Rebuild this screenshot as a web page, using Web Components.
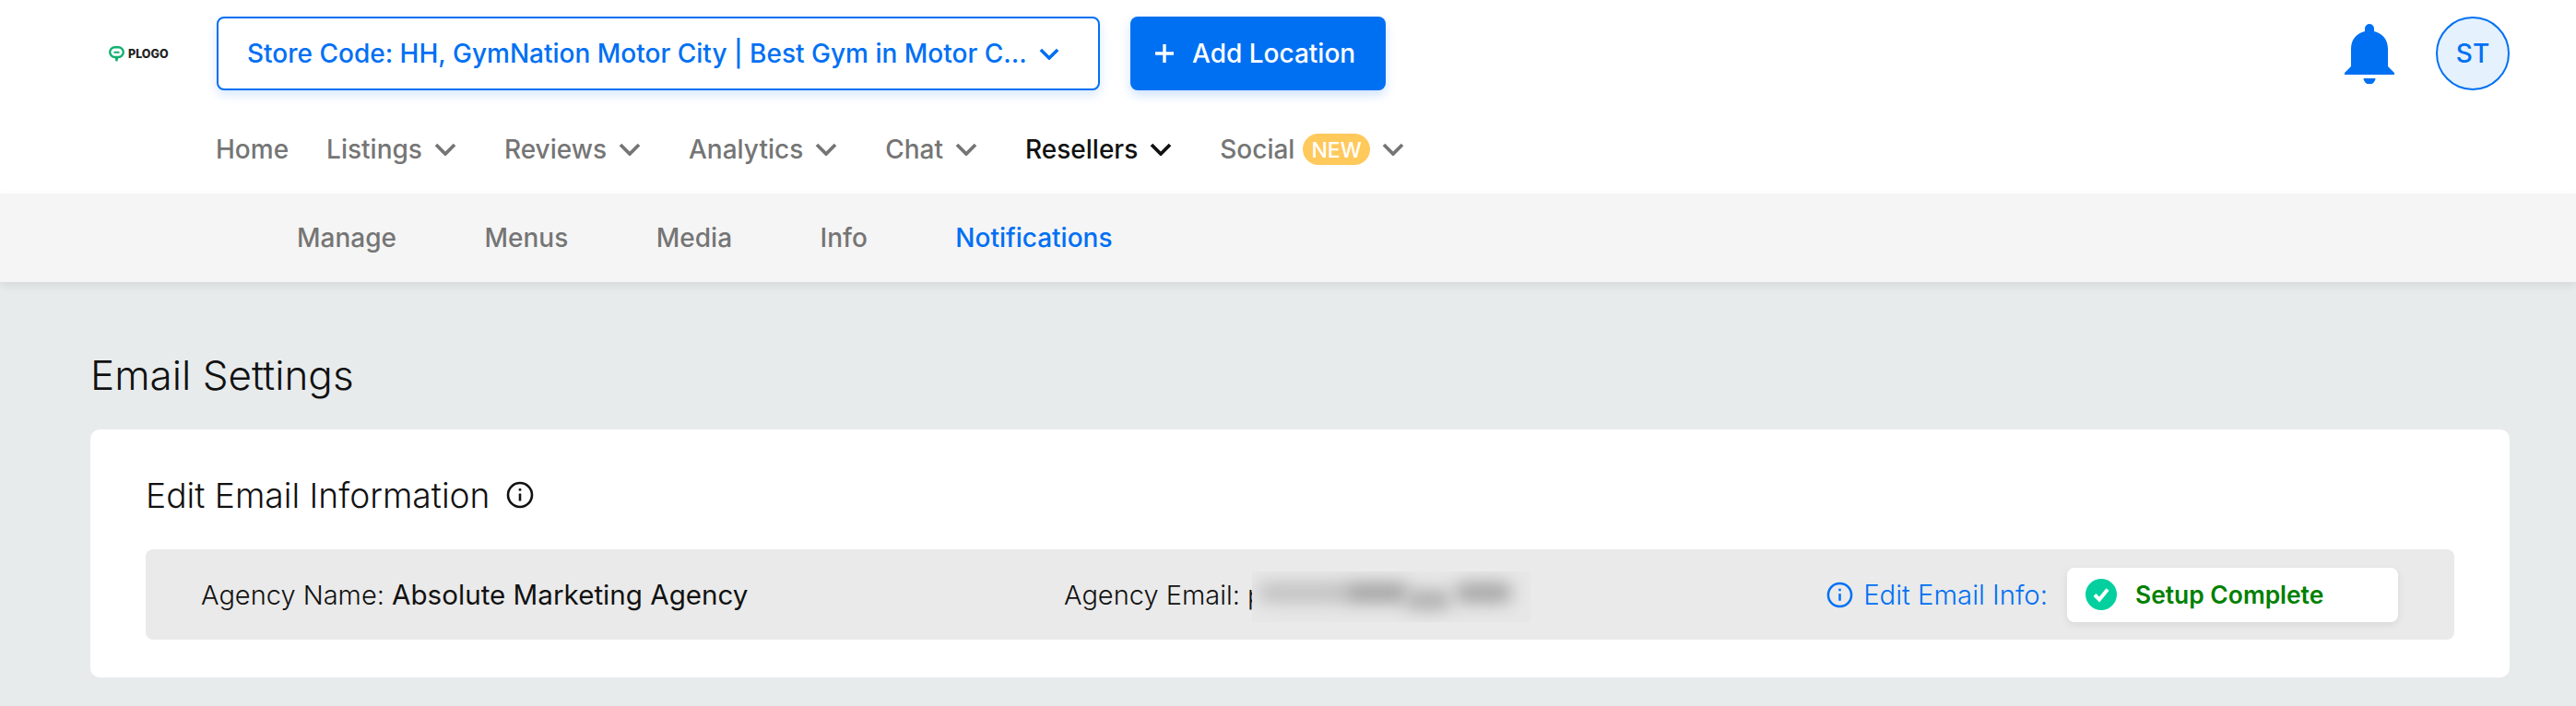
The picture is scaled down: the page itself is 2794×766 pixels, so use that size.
<!DOCTYPE html>
<html>
<head>
<meta charset="utf-8">
<style>
html,body{margin:0;padding:0;height:766px;overflow:hidden;background:#e8ebec;font-family:Inter,"Liberation Sans",sans-serif;}
</style>
</head>
<body>
<top-bar></top-bar>
<main-nav>
  <nav-link style="margin-right:41px">Home</nav-link>
  <nav-link arrow>Listings</nav-link>
  <nav-link arrow>Reviews</nav-link>
  <nav-link arrow>Analytics</nav-link>
  <nav-link arrow>Chat</nav-link>
  <nav-link arrow active>Resellers</nav-link>
  <nav-link arrow badge="NEW">Social</nav-link>
</main-nav>
<sub-nav>
  <sub-link>Manage</sub-link>
  <sub-link>Menus</sub-link>
  <sub-link>Media</sub-link>
  <sub-link>Info</sub-link>
  <sub-link active>Notifications</sub-link>
</sub-nav>
<email-settings></email-settings>

<script>
const chevron = `<svg viewBox="0 0 24 14" fill="none" stroke="currentColor" stroke-width="3.8"><path d="M2 2l10 10L22 2"/></svg>`
const infoIcon = `<svg viewBox="0 0 30 30" fill="none" stroke="currentColor" stroke-width="2.6"><circle cx="15" cy="15" r="13"/><path d="M15 13.5v8" /><path d="M15 8v2.6"/></svg>`

window.customElements.define('top-bar', class extends HTMLElement {
  constructor(){
    super();
    this.attachShadow({mode:'open'});
    this.shadowRoot.innerHTML = `
<style>
:host{display:flex;align-items:center;height:80px;padding:18px 72px 0 118px;background:#fff;color:#0070f3;font-size:28px;font-weight:500;}
.logo{display:flex;align-items:center;gap:4px;width:117px;font-size:12.500px;font-weight:800;color:#222;}
.logo svg{width:17px;height:17px;}
.store{display:flex;align-items:center;justify-content:space-between;box-sizing:border-box;width:958px;height:80px;padding:0 42px 0 31px;border:2px solid #0070f3;border-radius:8px;background:#fff;box-shadow:0 5px 12px rgba(0,112,243,.16);}
.store svg{width:22px;height:13px;}
.add{display:flex;align-items:center;gap:20px;box-sizing:border-box;width:277px;height:80px;margin-left:33px;padding-left:27px;border-radius:8px;background:#0070f3;color:#fff;box-shadow:0 5px 12px rgba(0,112,243,.2);}
.add svg{width:20px;height:20px;}
.right{display:flex;align-items:center;margin-left:auto;gap:45px;}
.bell{width:54px;height:65px;margin-top:1px;}
.avatar{display:flex;align-items:center;justify-content:center;box-sizing:border-box;width:80px;height:80px;border:2px solid #0070f3;border-radius:50%;background:#e5f1fd;font-size:28px;}
</style>
<div class="logo">
  <svg viewBox="0 0 17 17"><rect x="1.200" y="1.200" width="14.600" height="10.800" rx="5.400" fill="none" stroke="#12b06f" stroke-width="2.400"/><path d="M5.500 6.800h6" stroke="#12b06f" stroke-width="2"/><path d="M6.500 12h4l-1 4.500h-2z" fill="#12b06f"/></svg>
  <span>PLOGO</span>
</div>
<div class="store"><span>Store Code: HH, GymNation Motor City | Best Gym in Motor C...</span>${chevron}</div>
<div class="add">
  <svg viewBox="0 0 20 20" stroke="#fff" stroke-width="3.4"><path d="M10 0v20M0 10h20"/></svg>
  <span>Add Location</span>
</div>
<div class="right">
  <svg class="bell" viewBox="0 0 54 65" fill="#0070f3"><path d="M22 8V5a5 5 0 0110 0v3c9 2 15 9 15 19v19l7 7v2H0v-2l7-7V27c0-10 6-17 15-19z"/><path d="M20.500 59h13a6.500 6.500 0 01-13 0z"/></svg>
  <div class="avatar">ST</div>
</div>`;
  }
})

window.customElements.define('main-nav', class extends HTMLElement {
  constructor(){
    super();
    this.attachShadow({mode:'open'});
    this.shadowRoot.innerHTML = `
<style>
:host{display:flex;align-items:center;box-sizing:border-box;height:112px;padding:16px 0 0 234px;background:#fff;}
</style>
<slot></slot>`;
  }
})

window.customElements.define('nav-link', class extends HTMLElement {
  constructor(){
    super();
    this.attachShadow({mode:'open'});
  }
  connectedCallback(){
    const badge = this.getAttribute('badge')
    this.shadowRoot.innerHTML = `
<style>
:host{display:flex;align-items:center;color:#757575;font-size:28px;font-weight:500;}
:host([arrow]){margin-right:52px;}
:host([active]){color:#111;}
svg{width:24px;height:14px;margin-left:13px;}
.badge{display:inline-block;height:34px;line-height:36px;margin-left:9px;padding:0 9px;border-radius:17px;background:#ffc95c;color:#fff;font-size:23px;font-weight:500;}
</style>
<slot></slot>
${badge ? `<span class="badge">${badge}</span>` : ''}
${this.hasAttribute('arrow') ? chevron : ''}`;
  }
})

window.customElements.define('sub-nav', class extends HTMLElement {
  constructor(){
    super();
    this.attachShadow({mode:'open'});
    this.shadowRoot.innerHTML = `
<style>
:host{display:flex;align-items:center;gap:95.500px;box-sizing:border-box;height:96px;padding-left:322px;background:#f5f5f5;box-shadow:0 4px 10px rgba(0,0,0,.08);position:relative;}
</style>
<slot></slot>`;
  }
})

window.customElements.define('sub-link', class extends HTMLElement {
  constructor(){
    super();
    this.attachShadow({mode:'open'});
    this.shadowRoot.innerHTML = `
<style>
:host{display:block;color:#757575;font-size:28px;font-weight:500;}
:host([active]){color:#0070f3;}
</style>
<slot></slot>`;
  }
})

window.customElements.define('email-settings', class extends HTMLElement {
  constructor(){
    super();
    this.attachShadow({mode:'open'});
    this.shadowRoot.innerHTML = `
<style>
:host{display:block;padding:71px 72px 0 98px;color:#111;}
h1{margin:0 0 29px;font-size:44px;line-height:60px;font-weight:300;}
.card{box-sizing:border-box;height:269px;padding:46px 60px 0;border-radius:10px;background:#fff;}
h2{display:flex;align-items:center;gap:17px;margin:0 0 34px;height:50px;font-size:37.200px;font-weight:300;}
h2 svg{width:30px;height:30px;}
.row{display:flex;align-items:center;box-sizing:border-box;height:98px;padding:0 61px 0 60px;border-radius:8px;background:#eaeaea;font-size:29px;font-weight:300;}
.name{width:936px;}
b{font-size:29.600px;font-weight:400;}
.mail{position:relative;}
.blur{position:absolute;left:204px;top:-8px;width:302px;height:55px;background:#e7e7e7;overflow:hidden;}
.blur i{position:absolute;top:12px;height:22px;border-radius:10px;filter:blur(9px);}
.blur i:nth-child(1){left:6px;width:100px;background:#c2c2c2;}
.blur i:nth-child(2){left:100px;width:70px;background:#a4a4a4;}
.blur i:nth-child(3){left:166px;width:50px;background:#b0b0b0;top:20px;}
.blur i:nth-child(4){left:220px;width:62px;background:#a6a6a6;}
.edit{display:flex;align-items:center;gap:11px;margin-left:auto;color:#0070f3;font-size:29.300px;}
.edit svg{width:29px;height:29px;}
.pill{display:flex;align-items:center;gap:20px;box-sizing:border-box;width:359px;height:59px;margin-left:21px;padding-left:20px;border-radius:8px;background:#fff;box-shadow:0 3px 8px rgba(0,0,0,.08);color:#008000;font-size:26.400px;font-weight:600;}
.pill svg{width:34px;height:34px;}
</style>
<h1>Email Settings</h1>
<div class="card">
  <h2>Edit Email Information ${infoIcon}</h2>
  <div class="row">
    <span class="name">Agency Name: <b>Absolute Marketing Agency</b></span>
    <span class="mail">Agency Email: p<span class="blur"><i></i><i></i><i></i><i></i></span></span>
    <span class="edit">${infoIcon}<span>Edit Email Info:</span></span>
    <span class="pill">
      <svg viewBox="0 0 34 34"><circle cx="17" cy="17" r="17" fill="#03d09e"/><path d="M10 17.500l5 5 9-11" fill="none" stroke="#fff" stroke-width="4"/></svg>
      <span>Setup Complete</span>
    </span>
  </div>
</div>`;
  }
})
</script>
</body>
</html>
